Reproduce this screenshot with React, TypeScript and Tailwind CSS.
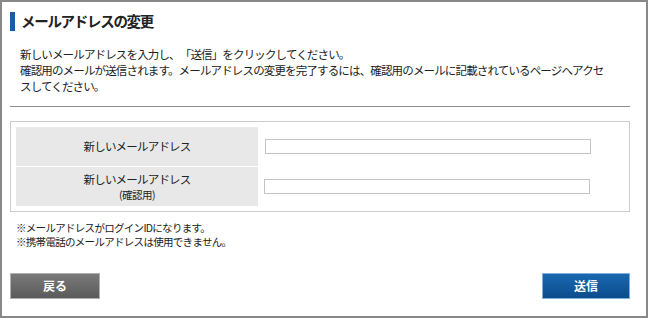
export default function App() {
  return (
    <div className="w-[648px] h-[318px] bg-white border-2 border-[#888888] font-['Noto_Sans_CJK_JP','Noto_Sans',sans-serif] text-[#222222] [text-spacing-trim:space-all]">
      <div className="w-[620px] ml-[8px] pt-[10px]">
        <h1 className="flex items-center gap-[6px] h-[19px] text-[14.5px] tracking-[-1.3px] font-bold leading-none">
          <span className="w-[5px] h-[19px] bg-[#1f5aa6]" />
          <span>メールアドレスの変更</span>
        </h1>

        <p className="mt-[15px] pl-[10px] text-[11.5px] tracking-[-0.85px] leading-[16px] whitespace-nowrap">
          新しいメールアドレスを入力し、「送信」をクリックしてください。
          <br />
          確認用のメールが送信されます。メールアドレスの変更を完了するには、確認用のメールに記載されているページへアクセ
          <br />
          スしてください。
        </p>

        <hr className="mt-[12px] border-0 border-t border-[#8c8c8c]" />

        <div className="mt-[14px] border border-[#cccccc] p-[5px] flex flex-col gap-[1px]">
          <div className="flex items-center">
            <div className="w-[242px] h-[39px] bg-[#e8e8e8] flex items-center justify-center text-[11.5px] tracking-[-0.8px]">
              新しいメールアドレス
            </div>
            <input className="ml-[7px] w-[326px] h-[15px] border border-[#c4c4c4] bg-white outline-none" />
          </div>
          <div className="flex items-center">
            <div className="w-[242px] h-[39px] bg-[#e8e8e8] flex flex-col items-center justify-center text-[11.5px] tracking-[-0.8px] leading-[15px]">
              <span>新しいメールアドレス</span>
              <span className="text-[10.5px] tracking-[-0.5px]">(確認用)</span>
            </div>
            <input className="ml-[6px] w-[326px] h-[15px] border border-[#c4c4c4] bg-white outline-none" />
          </div>
        </div>

        <div className="mt-[9px] pl-[6px] text-[10.5px] tracking-[-0.7px] leading-[14px]">
          <p>※メールアドレスがログインIDになります。</p>
          <p>※携帯電話のメールアドレスは使用できません。</p>
        </div>

        <div className="mt-[24px] flex justify-between">
          <button className="w-[90px] h-[26px] border border-[#b0b0b0] bg-[linear-gradient(#7a7a7a,#5a5a5a)] text-white text-[12px] font-bold">
            戻る
          </button>
          <button className="w-[88px] h-[26px] border border-[#7fb0dd] bg-[linear-gradient(#1a68b0,#0b4c8c)] text-white text-[12px] font-bold">
            送信
          </button>
        </div>
      </div>
    </div>
  );
}
